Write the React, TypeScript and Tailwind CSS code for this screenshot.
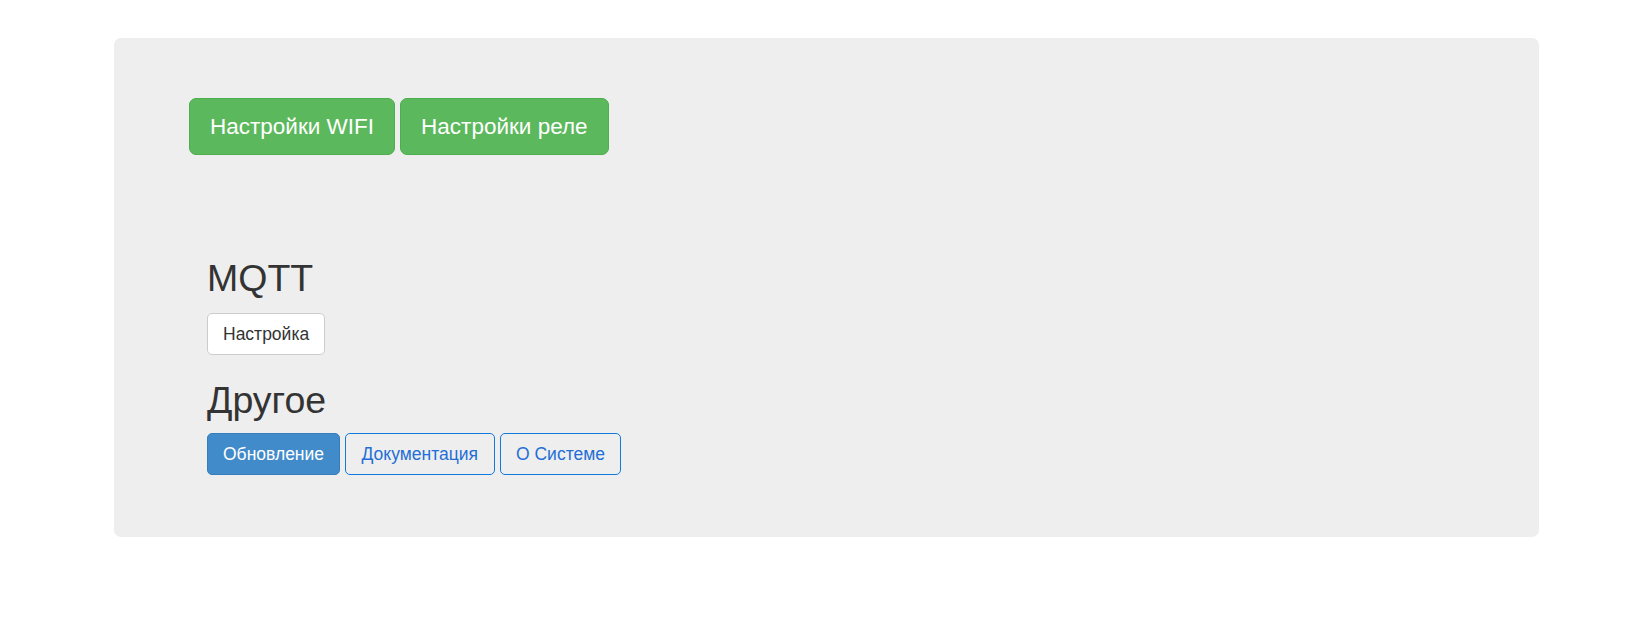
export default function App() {
  return (
    <div className="min-h-screen bg-white pt-[38px] font-['Liberation_Sans',Arial,sans-serif] text-[17.5px] text-[#333]">
      <div className="ml-[114px] w-[1425px] rounded-[7px] bg-[#eeeeee] pl-[75px] pr-[75px] pt-[60px] pb-[62px]">
        <div className="flex gap-[5px]">
          <button className="rounded-[7px] border border-[#4cae4c] bg-[#5cb85c] px-[20px] py-[12.5px] text-[22.5px] leading-[30px] text-white">
            Настройки WIFI
          </button>
          <button className="rounded-[7px] border border-[#4cae4c] bg-[#5cb85c] px-[20px] py-[12.5px] text-[22.5px] leading-[30px] text-white">
            Настройки реле
          </button>
        </div>

        <div className="mt-[103px] pl-[18px]">
          <h2 className="text-[37.5px] leading-[41px] font-normal">MQTT</h2>
          <div className="mt-[14px] flex gap-[5px]">
            <button className="rounded-[5px] border border-[#cccccc] bg-white px-[15px] py-[7.5px] leading-[25px] text-[#333]">
              Настройка
            </button>
          </div>

          <h2 className="mt-[25px] text-[37.5px] leading-[41px] font-normal">Другое</h2>
          <div className="mt-[12px] flex gap-[5px]">
            <button className="rounded-[5px] border border-[#357ebd] bg-[#428bca] px-[15px] py-[7.5px] leading-[25px] text-white">
              Обновление
            </button>
            <button className="rounded-[5px] border border-[#1279dd] bg-transparent px-[15.5px] py-[7.5px] leading-[25px] text-[#1f6fd6]">
              Документация
            </button>
            <button className="rounded-[5px] border border-[#1279dd] bg-transparent px-[15.5px] py-[7.5px] leading-[25px] text-[#1f6fd6]">
              О Системе
            </button>
          </div>
        </div>
      </div>
    </div>
  );
}
